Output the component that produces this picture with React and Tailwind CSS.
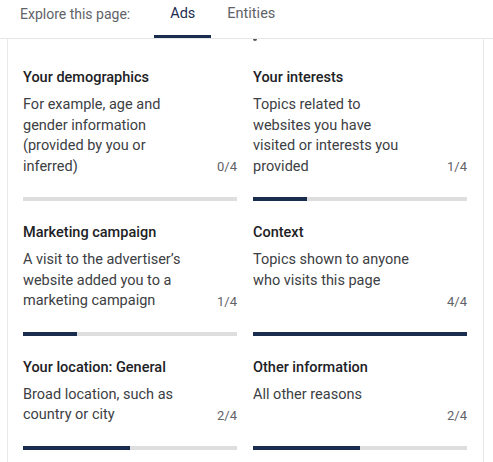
import React from 'react'

const REASONS = [
  { title: 'Your demographics', text: 'For example, age and gender information (provided by you or inferred)', value: 0 },
  { title: 'Your interests', text: 'Topics related to websites you have visited or interests you provided', value: 1 },
  { title: 'Marketing campaign', text: 'A visit to the advertiser\u2019s website added you to a marketing campaign', value: 1 },
  { title: 'Context', text: 'Topics shown to anyone who visits this page', value: 4 },
  { title: 'Your location: General', text: 'Broad location, such as country or city', value: 2 },
  { title: 'Other information', text: 'All other reasons', value: 2 },
]

function ReasonCard({ title, text, value }) {
  return (
    <div className="flex flex-col">
      <p className="text-[14.5px] font-medium leading-5 text-[#202124]">{title}</p>
      <div className="mt-[7px] flex flex-1 justify-between">
        <p className="w-[164px] self-start text-[14.5px] leading-[20.5px] text-[#3c4043]">{text}</p>
        <span className="self-end text-[13px] leading-[20px] text-[#5f6368]">{value}/4</span>
      </div>
      <div className="mt-5 h-1 w-full bg-[#dedede]">
        <div className="h-1 bg-[#1b2d4f]" style={{ width: `${(value / 4) * 100}%` }} />
      </div>
    </div>
  )
}

export default function App() {
  return (
    <div className="h-[462px] w-[493px] overflow-hidden bg-white" style={{ fontFamily: 'Roboto, "Noto Sans", sans-serif' }}>
      <div className="flex h-[39px] items-start border-b border-[#e6e6e6] pl-5">
        <span className="pt-1 text-[14px] leading-5 text-[#5f6368]">Explore this page:</span>
        <div className="ml-6 flex">
          <div className="h-[38px] border-b-[3px] border-[#1b2d4f] px-4 pt-1 text-[14.5px] leading-5 text-[#1b2d4f]">Ads</div>
          <div className="h-[38px] px-4 pt-1 text-[14.5px] leading-5 text-[#5f6368]">Entities</div>
        </div>
      </div>

      <div className="ml-[7px] h-[423px] w-[477px] overflow-hidden border-x border-[#e8e8e8]">
        <div className="ml-[245px] h-[2px] w-[4px] rounded-b-full bg-[#555]" />
        <div className="mt-[27px] grid grid-cols-[214px_214px] gap-x-4 gap-y-[22px] pl-[15px]">
          {REASONS.map((r) => (
            <ReasonCard key={r.title} {...r} />
          ))}
        </div>
      </div>
    </div>
  )
}
